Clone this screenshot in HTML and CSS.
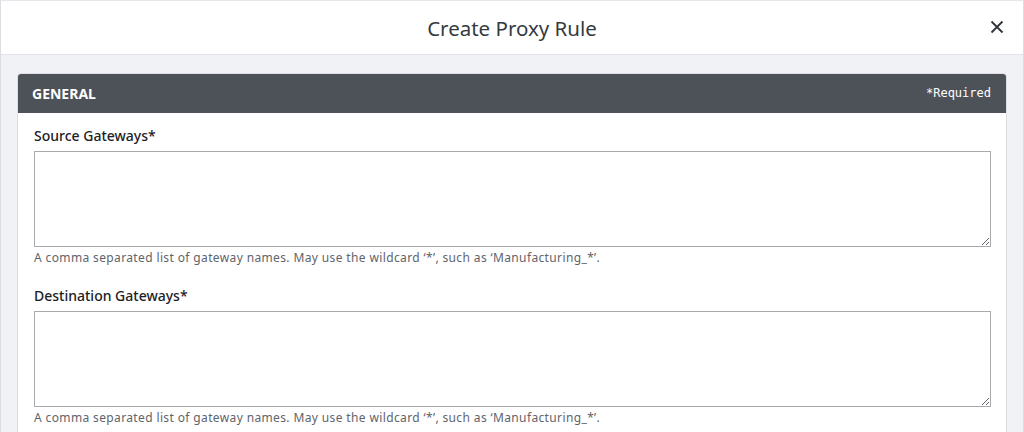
FILE: index.html
```html
<!DOCTYPE html>
<html>
<head>
<meta charset="utf-8">
<link rel="stylesheet" href="styles.css">
</head>
<body>
<div class="modal">
  <header class="modal-header">
    <h1 class="modal-title">Create Proxy Rule</h1>
    <button class="close" aria-label="Close">
      <svg width="14" height="14" viewBox="0 0 14 14"><path d="M1.5 1.5 L12.5 12.5 M12.5 1.5 L1.5 12.5" stroke="#2f343a" stroke-width="1.8" fill="none"/></svg>
    </button>
  </header>
  <div class="modal-body">
    <section class="card">
      <div class="card-header">
        <span class="card-title">GENERAL</span>
        <span class="required">*Required</span>
      </div>
      <div class="card-body">
        <div class="field">
          <label class="field-label">Source Gateways*</label>
          <textarea class="field-input"></textarea>
          <div class="field-help">A comma separated list of gateway names. May use the wildcard ‘*’, such as ‘Manufacturing_*’.</div>
        </div>
        <div class="field">
          <label class="field-label">Destination Gateways*</label>
          <textarea class="field-input"></textarea>
          <div class="field-help">A comma separated list of gateway names. May use the wildcard ‘*’, such as ‘Manufacturing_*’.</div>
        </div>
      </div>
    </section>
  </div>
</div>
</body>
</html>
```
FILE: styles.css
```css
* { box-sizing: border-box; }
html, body { margin: 0; padding: 0; }
body {
  font-family: "Noto Sans", "Open Sans", sans-serif;
  background: #f1f2f6;
  height: 432px;
  overflow: hidden;
}
.modal {
  border-left: 1px solid #dcdde3;
  border-right: 1px solid #dcdde3;
  border-top: 1px solid #e6e7ec;
  min-height: 432px;
  background: #f1f2f6;
}
.modal-header {
  height: 54px;
  background: #fff;
  border-bottom: 1px solid #e3e4e9;
  display: flex;
  align-items: center;
  justify-content: center;
  position: relative;
}
.modal-title {
  margin: 0;
  font-size: 20.5px;
  font-weight: 400;
  color: #343a40;
}
.close {
  position: absolute;
  right: 19px;
  top: 19px;
  border: 0;
  background: none;
  padding: 0;
  width: 14px;
  height: 14px;
  display: flex;
}
.modal-body {
  padding: 18px 16px 0 16px;
}
.card {
  background: #fff;
  border: 1px solid #dcdde3;
  border-radius: 4px 4px 0 0;
  overflow: hidden;
}
.card-header {
  height: 40px;
  background: #4d5259;
  display: flex;
  align-items: center;
  justify-content: space-between;
  padding: 0 16px 0 15px;
  color: #fff;
  margin: -1px -1px 0 -1px;
}
.card-title {
  font-weight: 700;
  font-size: 14px;
}
.required {
  font-family: "DejaVu Sans Mono", monospace;
  font-size: 12px;
}
.card-body {
  padding: 13px 15px 0 16px;
}
.field {
  display: flex;
  flex-direction: column;
  margin-bottom: 20px;
}
.field-label {
  font-size: 14px;
  font-weight: 500;
  color: #1d2125;
  line-height: 20px;
  margin-bottom: 5px;
}
.field-input {
  height: 96px;
  border: 1px solid #a6a9ad;
  border-radius: 0;
  resize: vertical;
  font-family: inherit;
  display: block;
}
.field-help {
  font-size: 12px;
  letter-spacing: 0.37px;
  color: #5f646a;
  line-height: 16px;
  margin-top: 3px;
}
```
